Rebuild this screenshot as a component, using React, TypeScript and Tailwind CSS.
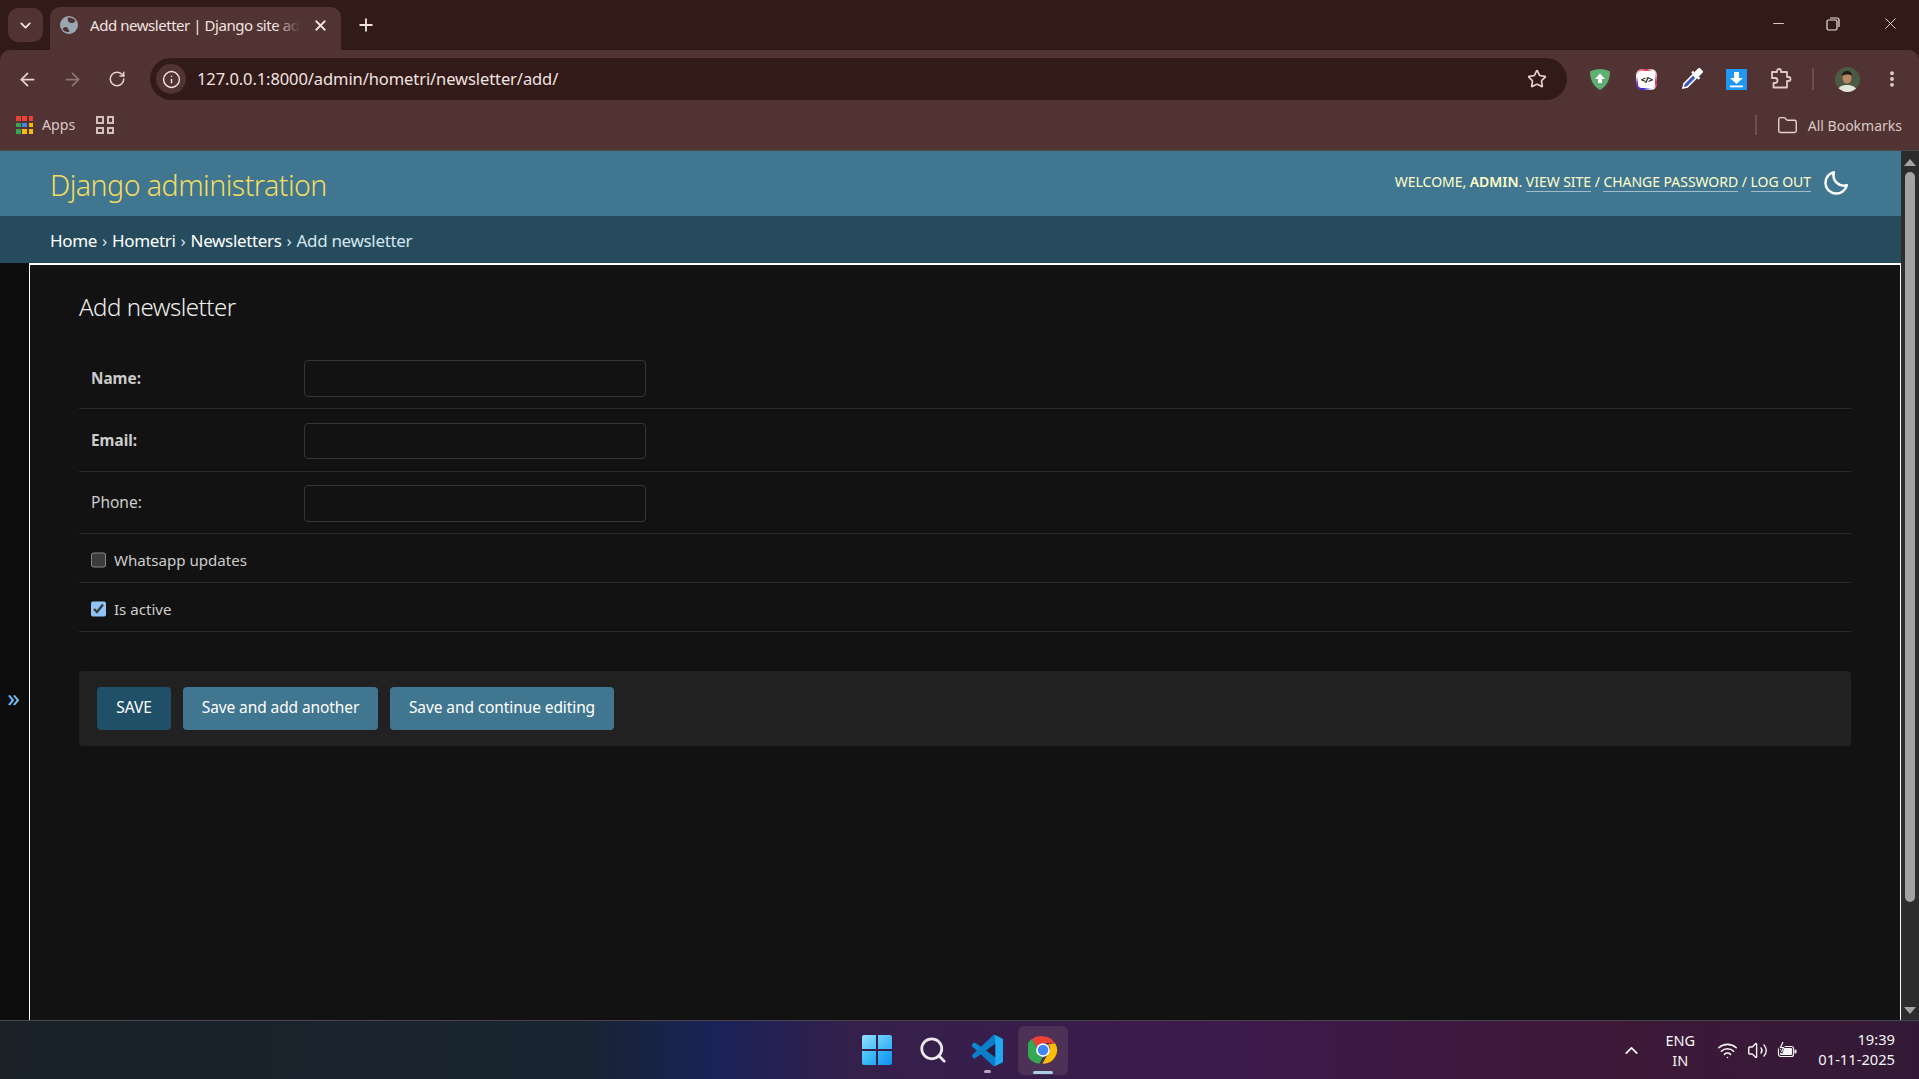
import { ArrowLeft, ArrowRight, RotateCw, Info, Star, EllipsisVertical, Folder, Plus, X, ChevronDown, ChevronUp, Minus, Search, Wifi, Volume2 } from "lucide-react";

function Globe() {
  return (
    <svg width="18" height="18" viewBox="0 0 18 18">
      <circle cx="9" cy="9" r="9" fill="#9aa7b0" />
      <path d="M2.500 13C6 9 8 12 9.500 15.500c-2 1.200-5 .5-7-2.500z" fill="#503332" />
      <path d="M8 1.500c3-.5 6 1 7.500 3.500-2 2.500-4.500 2.500-6 1.500S7 4 8 1.500z" fill="#503332" />
    </svg>
  );
}

function AppsIcon() {
  const c = ["#ea4335", "#ea4335", "#ea4335", "#34a853", "#4285f4", "#fbbc04", "#34a853", "#fbbc04", "#fbbc04"];
  return (
    <div className="grid grid-cols-3 gap-[2px] w-[17px]">
      {c.map((v, i) => (
        <div key={i} className="h-[4.500px] w-[4.500px]" style={{ background: v }} />
      ))}
    </div>
  );
}

function TabGroups() {
  return (
    <div className="grid grid-cols-2 gap-[3px] w-[18px]">
      {[0, 1, 2, 3].map((i) => (
        <div key={i} className="h-[7.500px] w-[7.500px] border-2 border-[#d3bfbb]" />
      ))}
    </div>
  );
}

function Shield() {
  return (
    <svg width="20" height="21" viewBox="0 0 20 21">
      <path d="M10 0c3 0 7 1 10 2.500 0 8-3 14.500-10 18.500C3 17 0 10.500 0 2.500 3 1 7 0 10 0z" fill="#5fae72" />
      <path d="M10 4.500l5 5.500h-3v4H8v-4H5z" fill="#fff" />
    </svg>
  );
}

function CodeExt() {
  return (
    <div className="h-[21px] w-[21px] rounded-[6px] bg-[conic-gradient(from_200deg,#3b2fc9,#7a2fc0,#ffffff_25%,#d8285a_45%,#ffffff_55%,#c4285a_75%,#ffffff_85%,#3b2fc9)] p-[2px]">
      <div className="flex h-full w-full items-center justify-center rounded-[4px] bg-white text-[9px] font-bold leading-none tracking-[-0.8px] text-[#111]">
        {"</>"}
      </div>
    </div>
  );
}

function Pipette() {
  return (
    <svg width="23" height="23" viewBox="0 0 22 22">
      <g transform="rotate(45 11 11)">
        <rect x="8" y="-2.500" width="6" height="7" rx="1.500" fill="#fff" />
        <rect x="6" y="4" width="10" height="2.500" fill="#fff" />
        <path d="M8 6h6v13l-3 5-3-5z" fill="#fff" />
        <path d="M9.500 7.500h3V18.500L11 21.500 9.500 18.500z" fill="#3a55c4" />
      </g>
    </svg>
  );
}

function DownloadExt() {
  return (
    <svg width="21" height="21" viewBox="0 0 21 21">
      <rect width="21" height="21" fill="#2196f3" />
      <path d="M8 3h5v6h4l-6.500 6L4 9h4z" fill="#fff" />
      <rect x="4" y="16.500" width="13" height="1.800" fill="#fff" />
    </svg>
  );
}

function PuzzleIcon() {
  return (
    <svg width="22" height="22" viewBox="0 0 22 22" fill="none" stroke="#e3c9c5" strokeWidth="1.800" strokeLinejoin="round">
      <path d="M2 4h5V3a2 2 0 0 1 4 0v1h6v5h1.500a2 2 0 0 1 0 4H17v6.500H3.500V15H5a2.500 2.500 0 0 0 0-5H2z" />
    </svg>
  );
}

function Avatar() {
  return (
    <svg width="25" height="25" viewBox="0 0 25 25">
      <defs>
        <clipPath id="av"><circle cx="12.500" cy="12.500" r="12.500" /></clipPath>
      </defs>
      <g clipPath="url(#av)">
        <rect width="25" height="25" fill="#4c5a44" />
        <path d="M2 25c1-6 6-7 10-7s9 1 11 7z" fill="#e4e6da" />
        <ellipse cx="12" cy="11" rx="4.500" ry="5.500" fill="#b98862" />
        <path d="M7 9c0-4 3-5 5.500-5S17 6 17 9c-2-2-7-2-10 0z" fill="#231a14" />
      </g>
    </svg>
  );
}

function WinLogo() {
  return (
    <div className="grid grid-cols-2 gap-[1.500px] w-[30px]">
      <div className="h-[14.250px] rounded-tl-[2px] bg-[linear-gradient(135deg,#8fe0fc,#4cc1f8)]" />
      <div className="h-[14.250px] rounded-tr-[2px] bg-[linear-gradient(135deg,#6fd2fb,#2fb0f7)]" />
      <div className="h-[14.250px] rounded-bl-[2px] bg-[linear-gradient(135deg,#5acbfa,#22a6f6)]" />
      <div className="h-[14.250px] rounded-br-[2px] bg-[linear-gradient(135deg,#36b6f8,#0e8ff3)]" />
    </div>
  );
}

function VSCode() {
  return (
    <svg width="31" height="31" viewBox="0 0 100 100">
      <path d="M96 11L75 1a6 6 0 0 0-7 1L28 39 11 26a4 4 0 0 0-5 0l-5 5a4 4 0 0 0 0 6l15 13L1 64a4 4 0 0 0 0 6l5 5a4 4 0 0 0 5 0l17-13 40 37a6 6 0 0 0 7 1l21-10a6 6 0 0 0 4-6V17a6 6 0 0 0-4-6z" fill="#0a7fc9" />
      <path d="M96 11L75 1a6 6 0 0 0-7 1L68 2 29 39 11 26a4 4 0 0 0-5 0l-5 5a4 4 0 0 0 0 6l15 13 52-47z" fill="#0a8ad6" />
      <path d="M75 99a6 6 0 0 1-7 0c3 2 7 0 7-4V5c0-4-4-6-7-3a6 6 0 0 1 7-1l21 10a6 6 0 0 1 4 6v66a6 6 0 0 1-4 6z" fill="#22a7f2" />
      <path d="M75 28L45 50l30 22z" fill="#2d1a3a" />
    </svg>
  );
}

function ChromeLogo() {
  return (
    <svg width="30" height="30" viewBox="0 0 48 48">
      <path d="M24 2a22 22 0 0 1 19 11H24a11 11 0 0 0-10 6.500L6 7A22 22 0 0 1 24 2z" fill="#ea4335" />
      <path d="M5.800 6.500L15 22a10 10 0 0 0 9 13l-6 11A22 22 0 0 1 5.800 6.500z" fill="#34a853" />
      <path d="M43.500 13A22 22 0 0 1 23 46l10-18a10 10 0 0 0-1-13z" fill="#fbbc04" />
      <circle cx="24" cy="24" r="11" fill="#fff" />
      <circle cx="24" cy="24" r="8.500" fill="#4285f4" />
    </svg>
  );
}

function BatteryIcon() {
  return (
    <svg width="21" height="18" viewBox="0 0 21 18">
      <rect x="1.500" y="5.500" width="15" height="10" rx="2" fill="#2e1c33" stroke="#f5f5f5" strokeWidth="1.200" />
      <rect x="3" y="7" width="12" height="7" rx="1" fill="#f5f5f5" />
      <rect x="17.500" y="8.500" width="2" height="4" rx="1" fill="#f5f5f5" />
      <path d="M6 0L3 6h3l-2 6" fill="none" stroke="#2e1c33" strokeWidth="3" />
      <path d="M6 1L3.500 6.500h3L4.500 11" fill="none" stroke="#f5f5f5" strokeWidth="1.200" />
    </svg>
  );
}

function Field({ label, bold }: { label: string; bold?: boolean }) {
  return (
    <div className="flex h-[62.500px] items-start border-b border-[#2a2a2a] pl-3 pt-[13.500px]">
      <label className={`flex h-[36px] w-[213px] items-center ${bold ? "text-[15.300px] font-bold" : "text-[15.500px]"} text-[#cccccc]`}>
        {label}
      </label>
      <input type="text" className="h-[36.500px] w-[342px] rounded-[4px] border border-[#353535] bg-[#121212]" />
    </div>
  );
}

function CheckRow({ label, checked }: { label: string; checked?: boolean }) {
  return (
    <div className="flex h-[49px] items-center gap-[8px] border-b border-[#2a2a2a] pl-3 pt-[3px]">
      <input type="checkbox" defaultChecked={checked} className="m-0 h-[16px] w-[15px] [color-scheme:dark] accent-[#90c4f9]" />
      <span className="relative top-[1px] text-[15.100px] text-[#cccccc]">{label}</span>
    </div>
  );
}

export default function App() {
  return (
    <div className="flex h-[1079px] w-[1919px] flex-col overflow-hidden bg-[#311a17] font-['Noto_Sans',sans-serif]">
      {/* Tab strip */}
      <div className="flex h-[50px] shrink-0 items-end bg-[#311a17] pl-2">
        <div className="mb-2 flex h-[34px] w-[35px] items-center justify-center rounded-[10px] bg-[#503332] text-[#f2e3e0]">
          <ChevronDown size={17} strokeWidth={2.500} />
        </div>
        <div className="relative ml-[7px] flex h-[43px] w-[291px] items-center rounded-t-[10px] bg-[#503332] pb-[7px] pl-[10px]">
          <Globe />
          <span className="relative ml-[12px] w-[210px] overflow-hidden whitespace-nowrap text-[15px] tracking-[-0.45px] text-[#f2e3e0]">
            Add newsletter | Django site admin
            <span className="absolute inset-y-0 right-0 w-[24px] bg-[linear-gradient(90deg,transparent,#503332)]" />
          </span>
          <X size={17} strokeWidth={2.500} className="ml-[12px] text-[#f2e3e0]" />
        </div>
        <div className="mb-[15px] ml-[15px] text-[#f2e3e0]">
          <Plus size={20} strokeWidth={2.200} />
        </div>
        <div className="flex-1" />
        <div className="mb-[17px] flex items-center text-[#f0e6e4]">
          <Minus size={17} strokeWidth={1.200} />
          <svg className="ml-[39px]" width="14" height="14" viewBox="0 0 14 14" fill="none" stroke="currentColor" strokeWidth="1.200">
            <rect x="1" y="3" width="10" height="10" rx="1.500" />
            <path d="M4 1h7a2 2 0 0 1 2 2v7" />
          </svg>
          <X className="ml-[41px] mr-[19px]" size={19} strokeWidth={1.100} />
        </div>
      </div>

      {/* Toolbar */}
      <div className="h-[101px] shrink-0 rounded-t-[10px] border-b border-[#4a4a4a] bg-[#503332]">
        <div className="flex h-[58px] items-start pt-[8px]">
          <div className="flex h-[42px] w-[150px] items-center text-[#e6d2ce]">
            <ArrowLeft className="ml-[17px]" size={21} strokeWidth={2} />
            <ArrowRight className="ml-[24px] text-[#8d7674]" size={21} strokeWidth={2} />
            <RotateCw className="ml-[25px]" size={18} strokeWidth={2} />
          </div>
          <div className="flex h-[42px] w-[1417px] items-center rounded-full bg-[#311a17] pl-[6px] pr-[20px]">
            <div className="flex h-[30px] w-[30px] items-center justify-center rounded-full bg-[#503332] text-[#f2e3e0]">
              <Info size={19} strokeWidth={1.800} />
            </div>
            <span className="ml-[11px] flex-1 text-[16.500px] tracking-[-0.09px] text-[#f2e3e0]">127.0.0.1:8000/admin/hometri/newsletter/add/</span>
            <Star size={20} strokeWidth={2} className="text-[#e6d2ce]" />
          </div>
          <div className="flex h-[42px] flex-1 items-center pl-[23px]">
            <Shield />
            <div className="ml-[26px]"><CodeExt /></div>
            <div className="ml-[23px]"><Pipette /></div>
            <div className="ml-[23px]"><DownloadExt /></div>
            <div className="ml-[23px]"><PuzzleIcon /></div>
            <div className="ml-[20px] h-[22px] w-[2px] bg-[#6e4f4d]" />
            <div className="ml-[21px]"><Avatar /></div>
            <EllipsisVertical className="ml-[22px] text-[#e6d2ce]" size={20} strokeWidth={2.600} />
          </div>
        </div>
        <div className="flex h-[34px] items-center pl-[16px] pr-[17px] text-[14.200px] text-[#dbc9c6]">
          <AppsIcon />
          <span className="ml-[9px]">Apps</span>
          <div className="ml-[21px]"><TabGroups /></div>
          <div className="flex-1" />
          <div className="h-[20px] w-[2px] bg-[#6e4f4d]" />
          <Folder className="ml-[20px] text-[#e6d2ce]" size={21} strokeWidth={1.600} />
          <span className="ml-[10px] text-[14px]">All Bookmarks</span>
        </div>
      </div>

      {/* Page + scrollbar */}
      <div className="flex min-h-0 flex-1">
        <div className="flex min-w-0 flex-1 flex-col">
          <header className="flex h-[65px] shrink-0 items-center justify-between bg-[#417690] pl-[50px] pr-[52px]">
            <h1 className="mt-[4px] text-[28.500px] font-light tracking-[-0.52px] text-[#f5dd5d]">Django administration</h1>
            <div className="flex items-center text-[14px] uppercase tracking-[-0.04px] text-[#ffffcc]">
              <span className="relative -top-[2px]">
                Welcome, <strong className="font-semibold">admin</strong>.{" "}
                <a className="border-b border-[#a0bccb]">View site</a> /{" "}
                <a className="border-b border-[#a0bccb]">Change password</a> /{" "}
                <a className="border-b border-[#a0bccb]">Log out</a>
              </span>
              <svg className="ml-[12px] -mt-[1px]" width="26" height="26" viewBox="0 0 24 24" fill="none" stroke="#fff" strokeWidth="2.300" strokeLinecap="round" strokeLinejoin="round">
                <path d="M10 2a10 10 0 1 0 12 12c-7 2-14-4-12-12z" />
              </svg>
            </div>
          </header>
          <div className="flex h-[47px] shrink-0 items-center bg-[#264b5d] pl-[50px] pt-[2px] text-[17px] tracking-[-0.33px] text-[#d4e6ef]">
            <a className="text-white">Home</a>
            <span className="mx-[5px]">›</span>
            <a className="text-white">Hometri</a>
            <span className="mx-[5px]">›</span>
            <a className="text-white">Newsletters</a>
            <span className="mx-[5px]">›</span>
            Add newsletter
          </div>
          <div className="flex min-h-0 flex-1">
            <div className="flex w-[29px] shrink-0 items-center justify-center bg-[#0c0c0c] pr-[2px] pt-[112px] text-[25px] text-[#79bff5]">
              »
            </div>
            <main className="min-w-0 flex-1 border-x border-t-2 border-x-white border-t-white bg-[#121212] pl-[49px] pr-[49px]">
              <h1 className="mt-[25px] text-[24px] font-light leading-[34px] tracking-[-0.48px] text-[#eeeeee]">Add newsletter</h1>
              <div className="mt-[22.500px]">
                <Field label="Name:" bold />
                <Field label="Email:" bold />
                <Field label="Phone:" />
                <CheckRow label="Whatsapp updates" />
                <CheckRow label="Is active" checked />
              </div>
              <div className="mt-[38.500px] flex h-[75px] items-center gap-[12px] rounded-[4px] bg-[#212121] pl-[18px]">
                <button className="h-[43px] w-[74px] rounded-[4px] bg-[#205067] text-[15.500px] uppercase text-white">Save</button>
                <button className="h-[43px] w-[195px] rounded-[4px] bg-[#417690] text-[15.500px] tracking-[-0.1px] text-white">Save and add another</button>
                <button className="h-[43px] w-[224px] rounded-[4px] bg-[#417690] text-[15.500px] tracking-[-0.1px] text-white">Save and continue editing</button>
              </div>
            </main>
          </div>
        </div>
        <div className="flex w-[18px] shrink-0 flex-col items-center bg-[#2c2c2c]">
          <div className="mt-[8px] h-0 w-0 border-x-[6px] border-b-[7px] border-x-transparent border-b-[#a3a3a3]" />
          <div className="mt-[6px] h-[730px] w-[10px] rounded-full bg-[#a3a3a3]" />
          <div className="flex-1" />
          <div className="mb-[6px] h-0 w-0 border-x-[6px] border-t-[7px] border-x-transparent border-t-[#a3a3a3]" />
        </div>
      </div>

      {/* Taskbar */}
      <div className="flex h-[59px] shrink-0 items-center border-t border-[#4a4450] bg-[linear-gradient(90deg,#1a2228_0%,#182430_30%,#1a2258_37.500%,#35204a_45%,#3c1a4c_64%,#3e1838_83%,#321a36_100%)]">
        <div className="w-[862px] shrink-0" />
        <WinLogo />
        <Search className="ml-[26px] text-[#ece8ee]" size={30} strokeWidth={2.200} />
        <div className="relative ml-[24px]">
          <VSCode />
          <div className="absolute -bottom-[7px] left-[12px] h-[3px] w-[7px] rounded-full bg-[#b5a8bb]" />
        </div>
        <div className="relative ml-[15px] flex h-[49px] w-[50px] items-center justify-center rounded-[6px] bg-[#4d3156]">
          <ChromeLogo />
          <div className="absolute bottom-[1px] left-[15px] h-[3px] w-[20px] rounded-full bg-[#a8cfe6]" />
        </div>
        <div className="flex-1" />
        <ChevronUp className="text-[#f5f5f5]" size={21} strokeWidth={2} />
        <div className="ml-[20px] flex w-[36px] flex-col items-center text-[14.500px] leading-[20px] text-[#f5f5f5]">
          <span>ENG</span>
          <span>IN</span>
        </div>
        <Wifi className="ml-[19px] text-[#f5f5f5]" size={21} strokeWidth={1.800} />
        <Volume2 className="ml-[9px] text-[#f5f5f5]" size={21} strokeWidth={1.600} />
        <div className="ml-[9px]"><BatteryIcon /></div>
        <div className="-mt-[2px] ml-[20px] mr-[24px] flex flex-col items-end text-[14.700px] leading-[20px] text-[#f5f5f5]">
          <span>19:39</span>
          <span>01-11-2025</span>
        </div>
      </div>
    </div>
  );
}
